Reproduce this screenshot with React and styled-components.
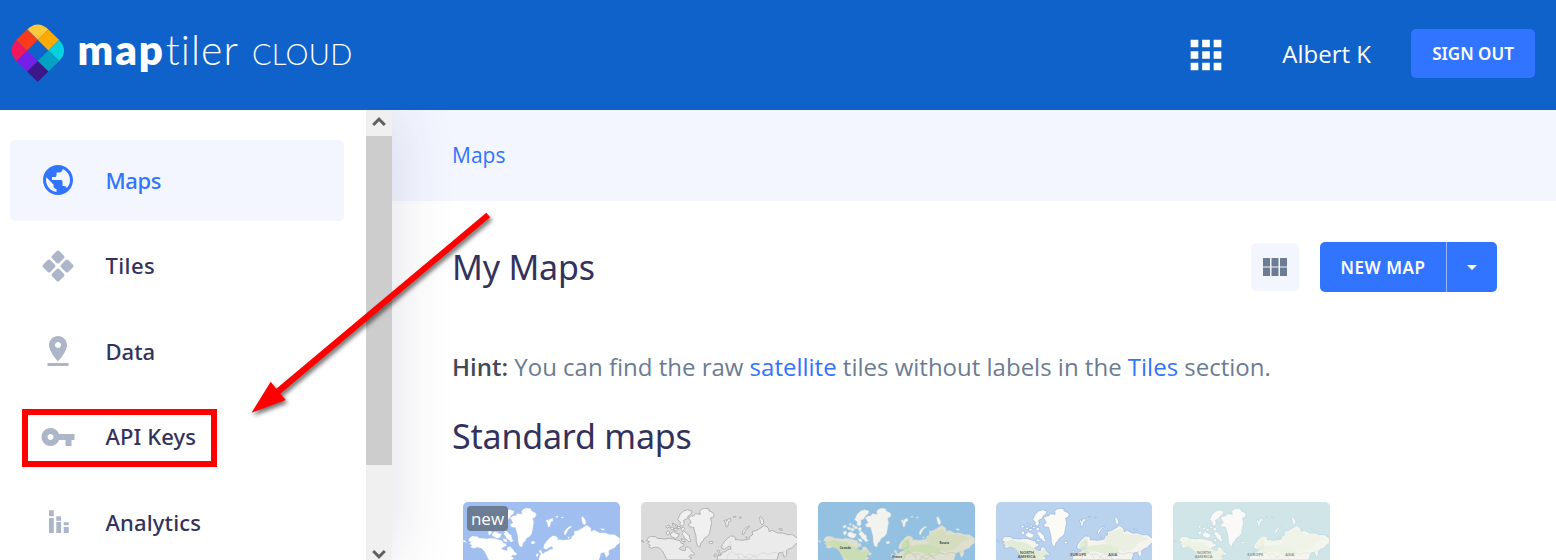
import React from "react";
import styled, { createGlobalStyle } from "styled-components";

const GlobalStyle = createGlobalStyle`
  * { box-sizing: border-box; }
  body { margin: 0; background: #fff; overflow: hidden; font-family: "Open Sans", "Noto Sans", sans-serif; }
  h1, h2, p { margin: 0; }
  a { color: #3174ff; text-decoration: none; }
  button { border: 0; padding: 0; font: inherit; }
  svg { display: block; }
`;

const heading = `"Noto Sans", "Open Sans", sans-serif`;

const Page = styled.div`
  position: relative;
  display: flex;
  flex-direction: column;
  height: 560px;
  overflow: hidden;
`;

const Header = styled.header`
  display: flex;
  align-items: center;
  flex: 0 0 110px;
  background: #0f62c9;
  color: #fff;
  padding: 0 21px 3px 10px;
`;

const Brand = styled.div`
  display: flex;
  align-items: center;
  margin-right: auto;
  padding-bottom: 1px;
`;

const Wordmark = styled.div`
  display: flex;
  align-items: baseline;
  margin-left: 11.5px;
  height: 59px;
  line-height: 50px;
  white-space: pre;
`;

const BrandWord = styled.span`
  font-family: Lato, sans-serif;
  font-size: ${(p) => p.$size}px;
  font-weight: ${(p) => p.$weight};
  font-variant-ligatures: none;
  letter-spacing: ${(p) => p.$spacing || 0}px;
  margin-left: ${(p) => p.$gap || 0}px;
`;

const AppsButton = styled.div`
  padding-top: 2px;
`;

const UserName = styled.span`
  font-size: 24px;
  padding-bottom: 1px;
  margin: 0 40px 0 53.5px;
`;

const SignOut = styled.button`
  width: 124px;
  height: 49px;
  border-radius: 5px;
  background: #3174ff;
  color: #fff;
  font-family: ${heading};
  font-size: 17px;
  font-weight: 600;
`;

const Body = styled.div`
  display: flex;
  flex: 1;
  min-height: 0;
`;

const Sidebar = styled.aside`
  position: relative;
  z-index: 1;
  display: flex;
  flex: 0 0 392px;
  background: #fff;
  box-shadow: 0 0 60px rgba(50, 50, 93, 0.15);
  clip-path: inset(0 -80px 0 0);
`;

const Menu = styled.nav`
  display: flex;
  flex-direction: column;
  gap: 4.5px;
  flex: 1;
  padding: 30px 22px 0 10px;
  overflow: hidden;
`;

const MenuItem = styled.a`
  display: flex;
  align-items: center;
  flex: 0 0 81px;
  padding: 0 0 1px 30px;
  border-radius: 5px;
  background: ${(p) => (p.$active ? "#f3f6ff" : "transparent")};
  color: ${(p) => (p.$active ? "#3174ff" : "#32325d")};
  font-family: ${heading};
  font-size: 22px;
  font-weight: 500;
  svg { color: ${(p) => (p.$active ? "#3174ff" : "#adb5c9")}; margin-right: 29.5px; }
`;

const MenuLabel = styled.span`
  padding-bottom: 0.5px;
  letter-spacing: ${(p) => p.$spacing}px;
  white-space: nowrap;
`;

const ScrollTrack = styled.div`
  display: flex;
  flex-direction: column;
  flex: 0 0 26px;
  background: #f0f0f0;
`;

const ScrollButton = styled.div`
  flex: 0 0 ${(p) => p.$height}px;
  display: flex;
  justify-content: center;
  padding-top: ${(p) => p.$top}px;
`;

const ScrollThumb = styled.div`
  flex: 0 0 329px;
  background: #cdcdcd;
  margin-bottom: auto;
`;

const Main = styled.main`
  flex: 1;
  min-width: 0;
  overflow: hidden;
`;

const Breadcrumb = styled.div`
  display: flex;
  align-items: center;
  height: 91px;
  padding: 0 0 2px 60px;
  background: #f3f6ff;
  font-size: 21px;
`;

const Content = styled.div`
  padding: 41px 59px 0 60px;
`;

const TitleRow = styled.div`
  display: flex;
  align-items: center;
  height: 50px;
`;

const Title = styled.h1`
  color: #32325d;
  font-family: ${heading};
  font-size: 34px;
  font-weight: 400;
  line-height: 50px;
  letter-spacing: -0.2px;
  white-space: nowrap;
  margin-right: auto;
`;

const ViewToggle = styled.button`
  display: flex;
  align-items: center;
  justify-content: center;
  width: 48px;
  height: 48px;
  border-radius: 5px;
  background: #f3f6ff;
  margin-right: 21px;
`;

const SplitButton = styled.div`
  display: flex;
  width: 177px;
  height: 50px;
  border-radius: 5px;
  background: #3174ff;
  color: #fff;
  font-family: ${heading};
  font-size: 17px;
  font-weight: 600;
  letter-spacing: 0.5px;
`;

const SplitMain = styled.div`
  display: flex;
  align-items: center;
  justify-content: center;
  width: 127px;
  padding-top: 1px;
  border-right: 1px solid #98baff;
`;

const SplitCaret = styled.div`
  display: flex;
  align-items: center;
  justify-content: center;
  flex: 1;
`;

const Hint = styled.p`
  height: 34px;
  margin: 58px 0 27px;
  color: #6b7c93;
  font-size: 24px;
  line-height: 34px;
  white-space: nowrap;
  strong { color: #424b57; font-weight: 600; }
`;

const Gallery = styled.div`
  display: flex;
  gap: 21px;
  padding: 41px 0 0 11px;
`;

const Thumb = styled.div`
  position: relative;
  flex: 0 0 156.5px;
  height: 157px;
  border-radius: 5px;
  overflow: hidden;
  background: ${(p) => p.$sea};
`;

const NewBadge = styled.span`
  position: absolute;
  left: 4px;
  top: 4px;
  width: 41px;
  height: 25px;
  border-radius: 4px;
  background: #6b7c93;
  color: #fff;
  font-size: 17px;
  line-height: 25px;
  text-align: center;
`;

const KeyHighlight = styled.div`
  position: absolute;
  z-index: 2;
  left: 22px;
  top: 409px;
  width: 195px;
  height: 58px;
  border: 6px solid #f00;
`;

const Pointer = styled.svg`
  position: absolute;
  z-index: 3;
  left: 240px;
  top: 200px;
  filter: drop-shadow(2px 3px 2px rgba(0, 0, 0, 0.55));
`;

const LogoMark = () => (
  <svg width="56" height="60" viewBox="10 23 56 60">
    <path d="M27.4 29.4Q37.5 19.5 48.4 29.4L37.7 39.8z" fill="#fdc936" />
    <path d="M48.4 29.4L59.2 40L48.4 50.4L37.7 39.8z" fill="#ffaa01" />
    <path d="M59.2 40Q69 50.5 59.2 61L48.4 50.4z" fill="#05d0df" />
    <path d="M48.4 50.4L59.2 61L48.4 71.4L37.7 61z" fill="#03a1c4" />
    <path d="M37.7 61L48.4 71.4L37.7 82L27 71.4z" fill="#3a1888" />
    <path d="M27 50.4L37.7 61L27 71.4L16.3 61z" fill="#761fe8" />
    <path d="M16.3 40Q7 50.5 16.3 61L27 50.4z" fill="#f1175d" />
    <path d="M27.2 29.4L37.7 39.8L27 50.4L16.3 40z" fill="#fb3a1b" />
  </svg>
);

const Icon = ({ d, size = 36 }) => (
  <svg width={size} height={size} viewBox="0 0 24 24" fill="currentColor">
    <path d={d} />
  </svg>
);

const PUBLIC = "M12 2C6.48 2 2 6.48 2 12s4.48 10 10 10 10-4.48 10-10S17.52 2 12 2zm-1 17.93c-3.95-.49-7-3.85-7-7.93 0-.62.08-1.21.21-1.79L9 15v1c0 1.1.9 2 2 2v1.93zm6.9-2.54c-.26-.81-1-1.39-1.9-1.39h-1v-3c0-.55-.45-1-1-1H8v-2h2c.55 0 1-.45 1-1V7h2c1.1 0 2-.9 2-2v-.41c2.93 1.19 5 4.06 5 7.41 0 2.08-.8 3.97-2.1 5.39z";
const PIN = "M18 8c0-3.31-2.69-6-6-6S6 4.69 6 8c0 4.5 6 11 6 11s6-6.5 6-11zm-8 0c0-1.1.9-2 2-2s2 .9 2 2-.89 2-2 2c-1.1 0-2-.9-2-2zM5 20v2h14v-2H5z";
const KEY = "M12.65 10C11.83 7.67 9.61 6 7 6c-3.31 0-6 2.69-6 6s2.69 6 6 6c2.61 0 4.83-1.67 5.65-4H17v4h4v-4h2v-4H12.65zM7 14c-1.1 0-2-.9-2-2s.9-2 2-2 2 .9 2 2-.9 2-2 2z";
const APPS = "M4 8h4V4H4v4zm6 12h4v-4h-4v4zm-6 0h4v-4H4v4zm0-6h4v-4H4v4zm6 0h4v-4h-4v4zm6-10v4h4V4h-4zm-6 4h4V4h-4v4zm6 6h4v-4h-4v4zm0 6h4v-4h-4v4z";

const TilesIcon = () => (
  <svg width="36" height="36" viewBox="0 0 36 36" fill="currentColor">
    {[[18, 9], [18, 27], [9, 18], [27, 18]].map(([x, y]) => (
      <rect key={`${x}-${y}`} x={x - 5.1} y={y - 5.1} width="10.2" height="10.2" rx="1.8" transform={`rotate(45 ${x} ${y})`} />
    ))}
  </svg>
);

const AnalyticsIcon = () => (
  <svg width="36" height="36" viewBox="0 0 36 36" fill="currentColor">
    <path d="M9 6.3h4.8v6H9zM9 14h4.8v15H9zM16.3 12.3h4.8v4.4h-4.8zM16.3 18h4.8v11h-4.8zM23.7 18.3h5v3h-5zM23.7 23h5v6h-5z" />
  </svg>
);

const Chevron = ({ down }) => (
  <svg width="14" height="11" viewBox="0 0 14 11" fill="none" stroke="#606060" strokeWidth="3">
    <path d={down ? "M1.2 2L7 7.8L12.8 2" : "M1.2 9L7 3.2L12.8 9"} />
  </svg>
);

const LAND = "M20 109L28 103L43 104L49 109L73 111L82 109L98 111L110 115L117 116L121 124L128 125L130 131L121 135L114 140L124 145L133 146L134 136L142 134L149 142L155 151L162 155L157 160L149 158L144 164L153 168L145 174H78L71 160L65 148L56 139L44 135L32 139L23 135L28 130L20 125L26 119L17 117zM242 139L244 128L252 117L261 108L269 102L278 103L285 108L283 114L292 113L301 115L318 113L325 111L327 103L335 99L334 88L345 86L356 80L371 70L383 78L385 89L394 85L410 93L426 93L440 98L455 98L470 109V123L461 129L455 137L445 141L437 146L438 158L430 166L425 151L414 153L408 174H228L231 161L240 157L246 151L255 148L261 143L271 141L267 132L257 137L251 142zM0 115l6 1 4 5-8-2zM228 147l6-3 3 9 5 6-9 3 1-7zM222 155l5 2-4 7-4-2z";
const ARCTIC = "M110 53L118 36L128 27L140 23L153 27L151 35L143 41L137 51L128 55L130 66L124 73L116 67L119 61zM94 63l7 3-5 5zM104 66l8 7-7 4zM74 73l10-4 1 6-7 4zM87 76l10 0 2 8-9-2zM99 79l11 1-4 8-8-3zM75 91l8-5 4 7-8 7zM90 93l8-4 10 6 7 0-3 10-8 4-10-4-6-5zM119 80l8-5 4 6-4 5 9 6 3 5 6 3 1 10 5 6-7 4-6-7-7-4-3-8-6-5 5-5zM109 73l10 1-2 6-7 0zM120 110l10 2 3 8-9-2zM249 56l7-3 1 6 3-7 9-3 1 8-7 3-2 13-5 2-2-12zM304 97l2-11 9-9 10-5 0 4-9 6-8 16zM356 46l4-2 7 10 2 9-5 6-5-7zM414 80l10 1 0 4-7-1zM205 119l9-1 2 5-8 3-3-3zM277 45l8-3-1 4zM295 45l7 1-5 3zM315 104l5 2-4 4z";
const GREENLAND = "M142 47L151 42L158 42L163 35L178 37L176 29L181 22L190 19L204 20L204 26L216 32L220 38L216 46L209 48L212 62L209 79L206 95L200 103L190 109L186 118L180 122L177 135L170 132L166 119L165 102L161 88L158 76L146 75L142 68L151 62z";
const FOREST = "M22 124L49 112L62 119L86 121L105 133L120 142L131 150L146 144L156 154L145 161L141 174H87L73 161L57 140L39 133zM248 137L257 116L274 108L277 133L293 130L323 127L348 129L367 139L369 152L331 155L290 148L267 158L252 163L260 147z";
const MEADOW = "M325 116L341 92L374 80L386 97L430 98L457 112L431 121L416 138L386 151L342 134z";

const MapArt = ({ land, ice, forest, meadow, coast, coastWidth = 1, borders, labels, labelColor, labelSize = 11 }) => (
  <svg width="156.5" height="58" viewBox="0 0 470 174" strokeLinejoin="round">
    <path d={LAND} fill={land} stroke={coast} strokeWidth={coastWidth} />
    {forest && <path d={FOREST} fill={forest} opacity=".75" />}
    {meadow && <path d={MEADOW} fill={meadow} opacity=".8" />}
    <path d={ARCTIC} fill={ice} stroke={coast} strokeWidth={coastWidth} />
    <path d={GREENLAND} fill={ice} stroke={coast} strokeWidth={coastWidth} />
    {borders && (
      <path
        d="M257 174l5-17 9-8 14 8 17-2 9 10 15-9 21 7 18-11 18 5 16-6 16 4 16-7M305 174l8-9 12 7 13-10 14 9M268 118l4 17M288 158l8 14"
        fill="none" stroke={borders} strokeWidth="2" strokeDasharray="5 2"
      />
    )}
    {labels && labels.map(([text, x, y]) => (
      <text key={text} x={x} y={y} fill={labelColor} fontSize={labelSize} fontFamily="Open Sans, sans-serif" fontWeight="700" textAnchor="middle">{text}</text>
    ))}
  </svg>
);

const CONTINENTS = [["NORTH", 93, 156], ["AMERICA", 92, 169], ["EUROPE", 247, 162], ["ASIA", 351, 162]];

const MAPS = [
  { id: "plain", sea: "#a0beef", badge: true, art: { land: "#fff", ice: "#fff", coast: "#fff" } },
  { id: "toner", sea: "#dbdbdb", art: { land: "#ebebeb", ice: "#f0f0f0", coast: "#b2b2b2", coastWidth: 3, borders: "#c8c8c8" } },
  { id: "outdoor", sea: "#94c1e1", art: { land: "#dedfcf", ice: "#f2f2ef", forest: "#c3dcaa", meadow: "#d2dcb9", coast: "#d6dfdb", borders: "#b6b7a8", labels: [["Canada", 82, 140], ["Russia", 379, 126], ["France", 238, 169]], labelColor: "#454b45", labelSize: 9 } },
  { id: "streets", sea: "#b9d2ee", art: { land: "#f4f3ed", ice: "#fbfaf6", forest: "#dce9cf", meadow: "#e8eddd", coast: "#95b5e4", coastWidth: 2, borders: "#cbc8cb", labels: CONTINENTS, labelColor: "#626262", labelSize: 12 } },
  { id: "pastel", sea: "#cfe5e8", art: { land: "#f5f5f0", ice: "#faf9f8", forest: "#e9f1e0", meadow: "#edf3e6", coast: "#bcd7df", coastWidth: 2, borders: "#e5d9d7", labels: CONTINENTS, labelColor: "#919797", labelSize: 12 } },
];

const MENU = [
  { label: "Maps", icon: <Icon d={PUBLIC} />, active: true, spacing: -0.4 },
  { label: "Tiles", icon: <TilesIcon />, spacing: 0.4 },
  { label: "Data", icon: <Icon d={PIN} />, spacing: 0 },
  { label: "API Keys", icon: <Icon d={KEY} />, spacing: 0.1 },
  { label: "Analytics", icon: <AnalyticsIcon />, spacing: 0.15 },
];

export default function App() {
  return (
    <Page>
      <GlobalStyle />
      <Header>
        <Brand>
          <LogoMark />
          <Wordmark>
            <BrandWord $size={42} $weight={800} $spacing={1.9}>map</BrandWord>
            <BrandWord $size={41} $weight={300} $spacing={1} $gap={1}>tiler</BrandWord>
            <BrandWord $size={29} $weight={300} $spacing={0.3} $gap={13}>CLOUD</BrandWord>
          </Wordmark>
        </Brand>
        <AppsButton><Icon d={APPS} size={46} /></AppsButton>
        <UserName>Albert K</UserName>
        <SignOut>SIGN OUT</SignOut>
      </Header>
      <Body>
        <Sidebar>
          <Menu>
            {MENU.map((item) => (
              <MenuItem key={item.label} $active={item.active}>
                {item.icon}
                <MenuLabel $spacing={item.spacing}>{item.label}</MenuLabel>
              </MenuItem>
            ))}
          </Menu>
          <ScrollTrack>
            <ScrollButton $height={26} $top={6}><Chevron /></ScrollButton>
            <ScrollThumb />
            <ScrollButton $height={13} $top={2}><Chevron down /></ScrollButton>
          </ScrollTrack>
        </Sidebar>
        <Main>
          <Breadcrumb><a>Maps</a></Breadcrumb>
          <Content>
            <TitleRow>
              <Title>My Maps</Title>
              <ViewToggle>
                <svg width="24" height="18" viewBox="0 0 24 18" fill="#6b7c93">
                  <path d="M0 0h7v8.4H0zM8.5 0h7v8.4h-7zM17 0h7v8.4h-7zM0 9.6h7V18H0zM8.5 9.6h7V18h-7zM17 9.6h7V18h-7z" />
                </svg>
              </ViewToggle>
              <SplitButton>
                <SplitMain>NEW MAP</SplitMain>
                <SplitCaret>
                  <svg width="10" height="5" viewBox="0 0 10 5" fill="#fff"><path d="M0 0h10L5 5z" /></svg>
                </SplitCaret>
              </SplitButton>
            </TitleRow>
            <Hint>
              <strong>Hint:</strong> You can find the raw <a>satellite</a> tiles without labels in the <a>Tiles</a> section.
            </Hint>
            <Title as="h2">Standard maps</Title>
            <Gallery>
              {MAPS.map((map) => (
                <Thumb key={map.id} $sea={map.sea}>
                  <MapArt {...map.art} />
                  {map.badge && <NewBadge>new</NewBadge>}
                </Thumb>
              ))}
            </Gallery>
          </Content>
        </Main>
      </Body>
      <KeyHighlight />
      <Pointer width="270" height="230" viewBox="240 200 270 230" fill="#f00">
        <path d="M486.3 212.8L490.2 217.2L280.3 393.7L285.8 400L251.5 412.8L270.7 381.8L276.3 388.8z" />
      </Pointer>
    </Page>
  );
}
